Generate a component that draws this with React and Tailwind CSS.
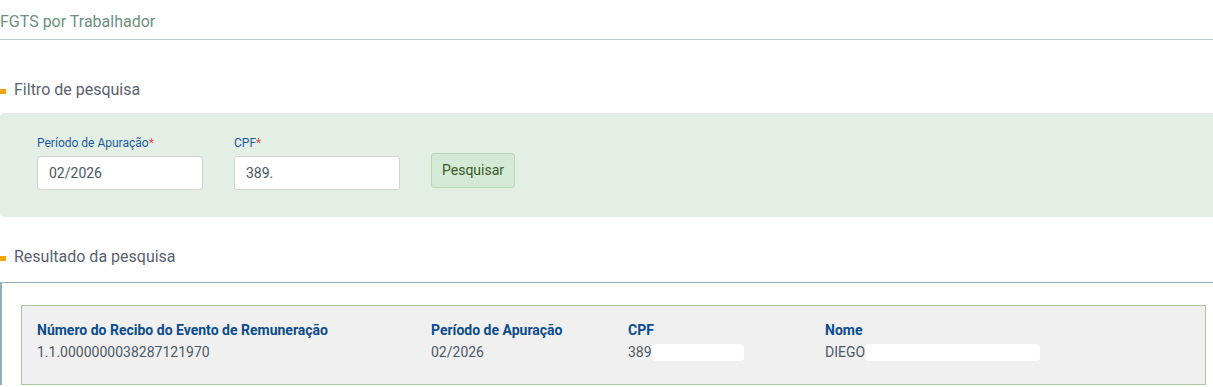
import React from "react";

function SectionTitle({ children }) {
  return (
    <div className="flex items-center h-[20px]">
      <span className="w-[6px] h-[5px] bg-[#f5a300] mr-[8px] mt-[3px]" />
      <span className="text-[16px] text-[#59626f]">{children}</span>
    </div>
  );
}

function Field({ label, value }) {
  return (
    <div className="flex flex-col">
      <label className="text-[12px] leading-[14px] text-[#1b5aa0] mb-[6px]">
        {label}
        <span className="text-[#d9534f]">*</span>
      </label>
      <input
        readOnly
        value={value}
        className="w-[166px] h-[34px] rounded-[3px] border border-[#cfd6d0] bg-white px-[11px] text-[14px] text-[#4d5560] outline-none"
      />
    </div>
  );
}

export default function App() {
  const cols = [
    { label: "Número do Recibo do Evento de Remuneração", value: "1.1.0000000038287121970", w: "w-[394px]" },
    { label: "Período de Apuração", value: "02/2026", w: "w-[197px]" },
    { label: "CPF", value: "389", w: "w-[197px]", mask: "w-[92px]" },
    { label: "Nome", value: "DIEGO", w: "w-[300px]", mask: "w-[175px]" },
  ];

  return (
    <div className="w-[1213px] h-[387px] overflow-hidden bg-white font-['Roboto',_'Liberation_Sans',_sans-serif]">
      {/* Header */}
      <div className="h-[40px] border-b border-[#bcc8d2] flex items-center">
        <h1 className="text-[16px] text-[#6c8f7f] mt-[4px]">FGTS por Trabalhador</h1>
      </div>

      {/* Filtro */}
      <div className="mt-[40px]">
        <SectionTitle>Filtro de pesquisa</SectionTitle>
      </div>
      <div className="mt-[13px] h-[104px] bg-[#e3efe5] rounded-l-[4px] pl-[37px] pt-[23px] flex items-start gap-[31px]">
        <Field label="Período de Apuração" value="02/2026" />
        <Field label="CPF" value="389." />
        <button className="mt-[17px] h-[35px] px-[10px] rounded-[3px] border border-[#b6d6b8] bg-[#d3ead6] text-[14px] text-[#3b5a24]">
          Pesquisar
        </button>
      </div>

      {/* Resultado */}
      <div className="mt-[30px]">
        <SectionTitle>Resultado da pesquisa</SectionTitle>
      </div>
      <div className="mt-[15px] border-t border-l-2 border-[#95afb9] pl-[19px] pr-[7px] pt-[22px]">
        <div className="h-[80px] border border-[#a8c79d] bg-[#f0f0f0] pl-[15px] pt-[16px] flex">
          {cols.map((c) => (
            <div key={c.label} className={c.w + " flex flex-col"}>
              <span className="text-[14px] font-bold text-[#0c4c8c] leading-[17px]">{c.label}</span>
              <span className="mt-[5px] text-[14px] text-[#4c5968] leading-[17px] flex items-center">
                {c.value}
                {c.mask && <span className={c.mask + " h-[17px] rounded-[4px] bg-white inline-block"} />}
              </span>
            </div>
          ))}
        </div>
      </div>
    </div>
  );
}
